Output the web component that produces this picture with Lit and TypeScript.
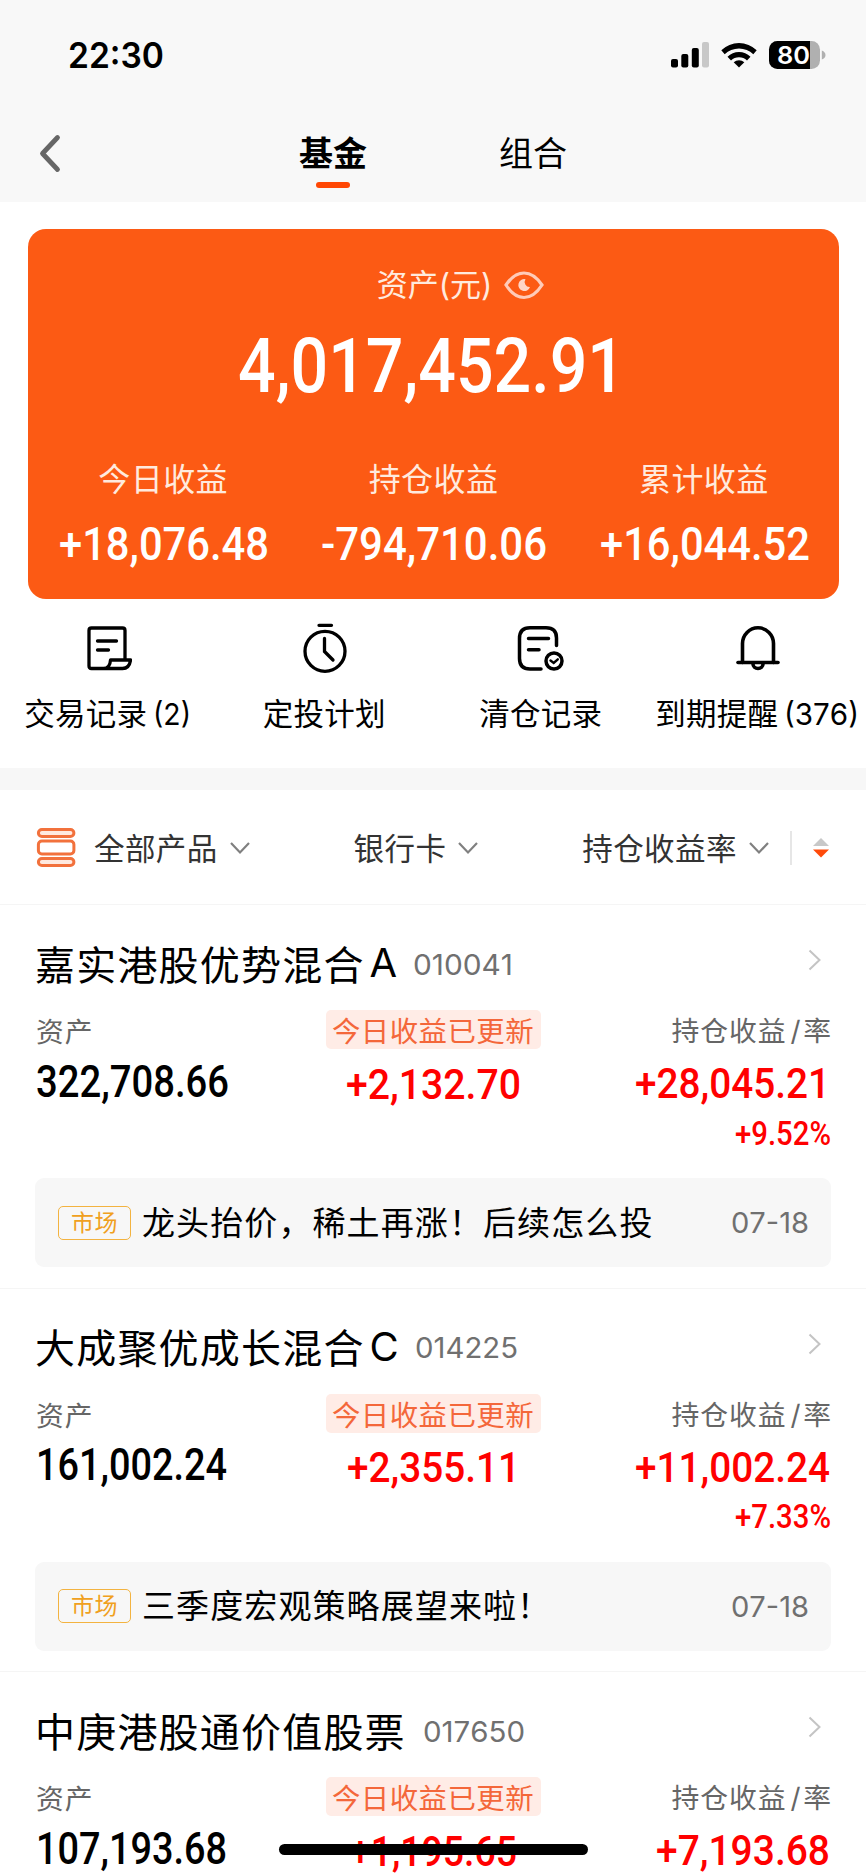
import { LitElement, html, css, svg } from "lit";
import { customElement, property } from "lit/decorators.js";

/** Numeric text set to an exact advance width; the box is as tall as the digits. */
@customElement("fit-number")
export class FitNumber extends LitElement {
  @property() text = "";
  @property({ type: Number }) w = 100;
  @property({ type: Number }) cap = 20;
  @property({ type: Number }) ratio = 0.711;

  static styles = css`
    :host { display: block; line-height: 0; letter-spacing: 0; font-kerning: none; }
    svg { display: block; overflow: visible; fill: currentColor; }
  `;

  render() {
    return html`<svg width=${this.w} height=${this.cap}>
      ${svg`<text x="0" y=${this.cap} font-size=${this.cap / this.ratio} textLength=${this.w} lengthAdjust="spacingAndGlyphs">${this.text}</text>`}
    </svg>`;
  }
}

interface Fund {
  name: string;
  share?: string;
  code: string;
  codeW: number;
  asset: string;
  assetW: number;
  today: string;
  todayW: number;
  hold: string;
  holdW: number;
  rate?: string;
  news?: string;
}

const FUNDS: Fund[] = [
  { name: "嘉实港股优势混合", share: "A", code: "010041", codeW: 100, asset: "322,708.66", assetW: 193, today: "+2,132.70", todayW: 175, hold: "+28,045.21", holdW: 195, rate: "+9.52%", news: "龙头抬价，稀土再涨！后续怎么投" },
  { name: "大成聚优成长混合", share: "C", code: "014225", codeW: 103, asset: "161,002.24", assetW: 191, today: "+2,355.11", todayW: 173, hold: "+11,002.24", holdW: 195, rate: "+7.33%", news: "三季度宏观策略展望来啦！" },
  { name: "中庚港股通价值股票", code: "017650", codeW: 102, asset: "107,193.68", assetW: 191, today: "+1,195.65", todayW: 167, hold: "+7,193.68", holdW: 174 },
];

const chevronDown = html`<svg class="chev" width="22" height="14" viewBox="0 0 22 14"><path d="M2 2L11 11.5L20 2" fill="none" stroke="#808080" stroke-width="2.2"/></svg>`;

const icons = [
  html`<svg width="48" height="54" viewBox="0 0 48 54"><g fill="none" stroke="#000" stroke-width="3.3" stroke-linejoin="round" stroke-linecap="round"><path d="M41 38V9.5Q41 7 38.5 7H7.5Q5 7 5 9.5V45Q5 47.5 7.5 47.5H38.5Q45.5 47.5 46.5 39H26.5Q26 47.5 19.5 47.5"/><path d="M13.5 20H32.5M13.5 29H24.5"/></g></svg>`,
  html`<svg width="48" height="54" viewBox="0 0 48 54"><g fill="none" stroke="#000" stroke-width="3.3" stroke-linecap="round"><circle cx="24" cy="30.3" r="20"/><path d="M18 4.3H30.5M23.5 17.5V30.5L32 39"/></g></svg>`,
  html`<svg width="48" height="54" viewBox="0 0 48 54"><g fill="none" stroke="#000" stroke-width="3.5" stroke-linecap="round"><path d="M39.5 24.5V17Q39.5 6.8 29 6.8H13Q2.5 6.8 2.5 17.5V37.5Q2.5 48 13 48H24"/><path d="M11.5 17.5H31.5M11.5 28.7H22"/><circle cx="37" cy="40" r="8"/><path d="M33.5 39.5L36.7 42L40.8 38.3" stroke-width="2.4"/></g></svg>`,
  html`<svg width="48" height="54" viewBox="0 0 48 54"><g fill="none" stroke="#000" stroke-width="3.6" stroke-linecap="round"><path d="M8.5 41.5V22.5A15.500 15.700 0 0 1 39.5 22.5V41.5"/><path d="M4 41.5H44"/><path d="M19 43A5 4.500 0 0 0 29 43"/></g></svg>`,
];

@customElement("app-root")
export class AppRoot extends LitElement {
  static styles = css`
    :host { display: block; position: relative; width: 866px; height: 1874px; overflow: hidden; background: #fff; color: #000; font-family: Inter, "Noto Sans CJK SC", sans-serif; }
    * { box-sizing: border-box; }
    svg { display: block; flex: none; }
    fit-number { font-family: Roboto, sans-serif; font-weight: 500; letter-spacing: 0; }
    .head { background: #f8f8f8; height: 202px; }
    .status { display: flex; height: 110px; padding: 42px 39px 0 68px; justify-content: space-between; align-items: flex-start; }
    .time { font-family: Inter, sans-serif; font-weight: 600; }
    .nav { display: flex; height: 92px; }
    .back { width: 297px; padding: 24px 0 0 38px; }
    .tab { width: 72px; text-align: center; font-size: 34px; line-height: 44px; padding-top: 22px; margin-right: 128px; white-space: nowrap; }
    .tab.on { font-weight: 700; }
    .bar { width: 34px; height: 6px; border-radius: 3px; background: #ff4704; margin: 6px auto 0; }
    .card { margin: 27px 27px 0 28px; height: 370px; border-radius: 18px; background: #fc5a14; color: #fff; display: flex; flex-direction: column; align-items: center; }
    .cap { display: flex; align-items: center; gap: 12px; height: 40px; margin: 36px 0 0 54px; font-size: 31px; line-height: 40px; color: #ffeade; }
    .total { margin-top: 33px; margin-right: 4px; }
    .trio { display: grid; grid-template-columns: repeat(3, 1fr); width: 100%; margin-top: 68px; }
    .trio div { display: flex; flex-direction: column; align-items: center; }
    .trio span { font-size: 32px; letter-spacing: 0.4px; line-height: 40px; color: #ffeade; }
    .trio fit-number { margin: 27px 0 0 2px; }
    .acts { display: grid; grid-template-columns: repeat(4, 1fr); height: 169px; padding-top: 22px; }
    .acts div { display: flex; flex-direction: column; align-items: center; font-size: 30.5px; letter-spacing: 0.3px; }
    .acts span { line-height: 40px; margin-top: 18.5px; margin-left: -1px; white-space: nowrap; }
    .acts fit-number { font-family: Inter, sans-serif; font-weight: 400; }
    .lab { display: flex; gap: 6px; align-items: center; }
    .gap { height: 22px; background: #f7f7f7; }
    .filter { display: flex; align-items: center; height: 115px; padding: 0 37px 0 36px; font-size: 30.5px; letter-spacing: 0.4px; color: #333; border-bottom: 1px solid #f5f5f5; }
    .filter span { white-space: nowrap; }
    .f1 { margin-left: 18px; }
    .f2 { margin-left: 103px; }
    .f3 { margin-left: 103px; }
    .chev { margin: 2px 0 0 11px; }
    .sep { width: 2px; height: 34px; background: #e6e6e6; margin: 2px 21px 0 20px; }
    .sort { margin-top: 2px; }
    .fund { height: 383.7px; padding: 36px 35px 0; border-bottom: 1px solid #f5f5f5; }
    .title { display: flex; align-items: center; height: 46px; padding: 0 9px 0 0; font-size: 40px; letter-spacing: 1.2px; white-space: nowrap; }
    .title span { position: relative; top: -1.5px; }
    .share { margin-left: 5px; }
    .code { font-family: Inter, sans-serif; font-weight: 400; color: #707070; margin-left: 17px; }
    .share + .code { margin-left: 15px; }
    .go { margin: -8px 0 0 auto; }
    .cols { display: grid; grid-template-columns: 1fr 215px 1fr; height: 168px; margin-top: 23px; }
    .col { display: flex; flex-direction: column; }
    .key { font-size: 27.8px; letter-spacing: 0.9px; line-height: 40px; height: 40px; color: #666; padding: 2px 0 0 1px; }
    .slash { margin: 0 2px 0 4px; }
    .left fit-number { margin: 15.5px 0 0 1px; }
    .mid { align-items: center; color: #f00; }
    .tag { width: 215px; height: 39px; border-radius: 5px; background: #ffece6; color: #f4673a; font-size: 28.4px; letter-spacing: 0.5px; line-height: 43px; text-align: center; white-space: nowrap; }
    .mid fit-number { margin-top: 18.5px; }
    .right { align-items: flex-end; color: #f00; }
    .right .key { padding: 1px 0 0; margin-right: -1px; }
    .right .sum { margin: 17px 1px 0 0; }
    .right .rate { margin: 23px 0 0; }
    .news { display: flex; align-items: center; height: 89px; border-radius: 9px; background: #f7f7f7; padding: 0 22px 0 23px; }
    .badge { width: 73px; height: 34px; border: 1.5px solid #f3b340; border-radius: 5px; color: #f0a020; font-size: 23px; line-height: 32px; text-align: center; letter-spacing: 0.5px; }
    .txt { margin-left: 11px; font-size: 33px; letter-spacing: 1.1px; white-space: nowrap; line-height: 44px; }
    .date { margin-left: auto; color: #707070; font-family: Inter, sans-serif; font-weight: 400; }
    .home { position: absolute; left: 279px; top: 1844px; width: 309px; height: 11px; border-radius: 6px; background: #000; }
  `;

  private fund(f: Fund) {
    return html`<section class="fund">
      <div class="title"><span>${f.name}</span>${f.share ? html`<span class="share">${f.share}</span>` : ""}
        <fit-number class="code" .text=${f.code} .w=${f.codeW} .cap=${21} .ratio=${0.727}></fit-number>
        <svg class="go" width="14" height="22" viewBox="0 0 14 22"><path d="M1.5 1.5L11.5 11L1.5 20.5" fill="none" stroke="#c4c4c4" stroke-width="2"/></svg>
      </div>
      <div class="cols">
        <div class="col left"><span class="key">资产</span><fit-number .text=${f.asset} .w=${f.assetW} .cap=${31}></fit-number></div>
        <div class="col mid"><span class="tag">今日收益已更新</span><fit-number .text=${f.today} .w=${f.todayW} .cap=${30.5}></fit-number></div>
        <div class="col right"><span class="key">持仓收益<span class="slash">/</span>率</span><fit-number class="sum" .text=${f.hold} .w=${f.holdW} .cap=${30.5}></fit-number>
          ${f.rate ? html`<fit-number class="rate" .text=${f.rate} .w=${96} .cap=${24}></fit-number>` : ""}</div>
      </div>
      ${f.news ? html`<div class="news"><span class="badge">市场</span><span class="txt">${f.news}</span>
        <fit-number class="date" .text=${"07-18"} .w=${78} .cap=${21} .ratio=${0.727}></fit-number></div>` : ""}
    </section>`;
  }

  render() {
    const acts = [["交易记录", "(2)", 38], ["定投计划", "", 0], ["清仓记录", "", 0], ["到期提醒", "(376)", 75]] as [string, string, number][];
    const trio = [["今日收益", "+18,076.48", 210], ["持仓收益", "-794,710.06", 226], ["累计收益", "+16,044.52", 210]] as [string, string, number][];
    return html`
      <header class="head">
        <div class="status">
          <fit-number class="time" .text=${"22:30"} .w=${96} .cap=${25.5} .ratio=${0.727}></fit-number>
          <svg width="156" height="28" viewBox="0 0 156 28" overflow="visible">
            <rect x="0" y="17" width="7" height="8.5" rx="2"/><rect x="10.3" y="12" width="7" height="13.5" rx="2"/><rect x="20.8" y="6" width="7" height="19.5" rx="2"/><rect x="31" y="0" width="7" height="25.5" rx="2" fill="#c8c8c8"/>
            <path d="M50.3 8.2A25.5 25.5 0 0 1 85.7 8.2L82.3 12.3A20.3 20.3 0 0 0 53.7 12.3Z"/><path d="M56.5 14.7A16.5 16.5 0 0 1 79.5 14.7L76 18.5A11.5 11.5 0 0 0 60 18.5Z"/><path d="M68 25.5L62.7 20.3A7.8 7.8 0 0 1 73.3 20.3Z"/>
            <rect x="98" y="-1" width="51" height="28" rx="8.5" fill="#b0b0b0"/><path d="M106.5 -1H139V27H106.5A8.5 8.5 0 0 1 98 18.5V7.5A8.5 8.5 0 0 1 106.5 -1Z"/><path d="M150.8 8.5Q154.5 10 154.5 13T150.8 17.5Z" fill="#b0b0b0"/>
            <text x="106" y="21.8" font-family="Inter" font-weight="600" font-size="24.5" textLength="33" lengthAdjust="spacingAndGlyphs" fill="#fff">80</text>
          </svg>
        </div>
        <nav class="nav">
          <div class="back"><svg width="24" height="40" viewBox="0 0 24 40"><path d="M19.5 3.5L4.5 19.5L19.5 35.5" fill="none" stroke="#666" stroke-width="4.8" stroke-linecap="round" stroke-linejoin="round"/></svg></div>
          <div class="tab on">基金<div class="bar"></div></div>
          <div class="tab">组合</div>
        </nav>
      </header>
      <section class="card">
        <div class="cap"><span>资产(元)</span>
          <svg width="40" height="30" viewBox="0 0 40 30"><path d="M2 15Q10 3 20 3T38 15Q30 27.5 20 27.5T2 15Z" fill="none" stroke="#ffcbb8" stroke-width="3.2"/><path d="M21.5 9.2A6 6 0 1 0 26 17A5 5 0 0 1 21.5 9.2Z" fill="#ffd5c6"/></svg></div>
        <fit-number class="total" .text=${"4,017,452.91"} .w=${387} .cap=${54}></fit-number>
        <div class="trio">${trio.map(([k, v, w]) => html`<div><span>${k}</span><fit-number .text=${v} .w=${w} .cap=${33}></fit-number></div>`)}</div>
      </section>
      <section class="acts">${acts.map(([k, n, w], i) => html`<div>${icons[i]}<span class="lab">${k}${n ? html`<fit-number .text=${n} .w=${w} .cap=${22} .ratio=${0.727}></fit-number>` : ""}</span></div>`)}</section>
      <div class="gap"></div>
      <section class="filter">
        <svg width="40" height="40" viewBox="0 0 40 40"><g fill="#ffe9df" stroke="#f2713c" stroke-width="3"><rect x="2.4" y="2.5" width="35.5" height="7" rx="3.5"/><rect x="2.4" y="14" width="35.5" height="13" rx="3.5" fill="#fff"/><rect x="2.4" y="31.500" width="35.5" height="7" rx="3.5"/></g></svg>
        <span class="f1">全部产品</span>${chevronDown}
        <span class="f2">银行卡</span>${chevronDown}
        <span class="f3">持仓收益率</span>${chevronDown}
        <div class="sep"></div>
        <svg class="sort" width="16" height="20" viewBox="0 0 16 20"><path d="M0 8L8 0L16 8Z" fill="#c8c8c8"/><path d="M0 11.5H16L8 19.5Z" fill="#ff4a0a"/></svg>
      </section>
      ${FUNDS.map((f) => this.fund(f))}
      <div class="home"></div>
    `;
  }
}
